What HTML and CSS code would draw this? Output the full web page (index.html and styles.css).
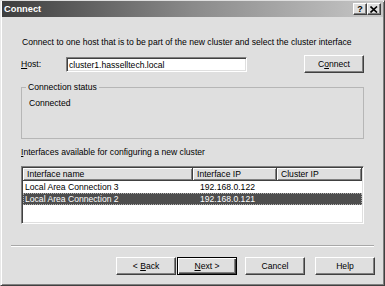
FILE: index.html
```html
<!DOCTYPE html>
<html>
<head>
<meta charset="utf-8">
<link rel="stylesheet" href="styles.css">
</head>
<body>
<div class="window">
  <div class="titlebar">
    <span class="title">Connect</span>
    <div class="tbtns">
      <span class="tbtn q">?</span>
      <span class="tbtn x"><svg width="8" height="7" viewBox="0 0 8 7"><path d="M0.5 0.5 L7 6.5 M7 0.5 L0.5 6.5" stroke="#000" stroke-width="1.6" fill="none"/></svg></span>
    </div>
  </div>
  <div class="content">
    <p class="intro">Connect to one host that is to be part of the new cluster and select the cluster interface</p>
    <div class="hostrow">
      <span class="hostlabel"><u>H</u>ost:</span>
      <div class="textbox">cluster1.hasselltech.local</div>
      <button class="btn connect">C<u>o</u>nnect</button>
    </div>
    <fieldset class="group">
      <legend>Connection status</legend>
      <div class="status">Connected</div>
    </fieldset>
    <div class="listlabel"><u>I</u>nterfaces available for configuring a new cluster</div>
    <div class="listview">
      <div class="lvhead">
        <div class="hcell c1">Interface name</div>
        <div class="hcell c2">Interface IP</div>
        <div class="hcell c3">Cluster IP</div>
      </div>
      <div class="lvrow">
        <div class="cell c1">Local Area Connection 3</div>
        <div class="cell c2">192.168.0.122</div>
        <div class="cell c3"></div>
      </div>
      <div class="lvrow selected">
        <div class="cell c1">Local Area Connection 2</div>
        <div class="cell c2">192.168.0.121</div>
        <div class="cell c3"></div>
      </div>
    </div>
  </div>
  <div class="sep"></div>
  <div class="footer">
    <button class="btn back">&lt; <u>B</u>ack</button>
    <button class="btn next default"><u>N</u>ext &gt;</button>
    <button class="btn cancel">Cancel</button>
    <button class="btn help">Help</button>
  </div>
</div>
</body>
</html>
```
FILE: styles.css
```css
* { box-sizing: border-box; }
html, body { margin: 0; padding: 0; }
body {
  width: 385px;
  height: 286px;
  overflow: hidden;
  background: #dfdfdf;
  font-family: "Liberation Sans", Arial, sans-serif;
  font-size: 8.6px;
  line-height: 11px;
  color: #000;
}
.window {
  width: 385px;
  height: 286px;
  background: #dfdfdf;
  border: 1px solid;
  border-color: #dfdfdf #404040 #404040 #e8e8e8;
  box-shadow: inset 1px 1px 0 #ffffff, inset -1px -1px 0 #808080;
  padding: 0 1px 1px 1px;
  display: flex;
  flex-direction: column;
}
.titlebar {
  height: 16px;
  flex: none;
  background: linear-gradient(to right, #3e3e3e 0%, #8a8a8a 50%, #c8c8c8 100%);
  display: flex;
  align-items: center;
  padding: 0 2px 0 2px;
}
.title {
  color: #fff;
  font-weight: bold;
  font-size: 9.3px;
  flex: 1;
}
.tbtns { display: flex; }
.tbtn {
  width: 14px;
  height: 12px;
  background: #dfdfdf;
  border: 1px solid;
  border-color: #fff #404040 #404040 #fff;
  box-shadow: inset -1px -1px 0 #808080;
  display: flex;
  align-items: center;
  justify-content: center;
  font-weight: bold;
  font-size: 9px;
  line-height: 9px;
}
.content {
  padding: 0 19px;
}
.intro {
  margin: 20px 0 0 0;
  padding-left: 1px;
}
.hostrow {
  margin-top: 7px;
  height: 18px;
  display: flex;
  align-items: center;
}
.hostlabel { width: 45px; }
.textbox {
  width: 181px;
  height: 15px;
  background: #fff;
  border: 1px solid;
  border-color: #808080 #fff #fff #808080;
  box-shadow: inset 1px 1px 0 #404040, inset -1px -1px 0 #dfdfdf;
  padding: 1px 0 0 2px;
  line-height: 12px;
}
.btn {
  font-family: inherit;
  font-size: 8.6px;
  line-height: 11px;
  color: #000;
  width: 60px;
  height: 18px;
  padding: 0;
  background: #dfdfdf;
  border: 1px solid;
  border-color: #fff #404040 #404040 #fff;
  box-shadow: inset -1px -1px 0 #808080;
  text-align: center;
}
.connect { margin-left: auto; }
.group {
  margin: 9px 0 0 0;
  height: 57px;
  padding: 5px 7px 0 7px;
  border: 1px solid #b6b6b6;
}
.group legend {
  padding: 0 2px;
  margin-left: -3px;
}
.listlabel { margin-top: 8px; }
.listview {
  margin-top: 8px;
  height: 58px;
  background: #fff;
  border: 1px solid;
  border-color: #808080 #fff #fff #808080;
  box-shadow: inset 1px 1px 0 #404040, inset -1px -1px 0 #dfdfdf;
  padding: 1px;
}
.lvhead { display: flex; height: 13px; }
.hcell {
  background: #dfdfdf;
  border-right: 1px solid #404040;
  border-bottom: 1px solid #404040;
  box-shadow: inset 1px 1px 0 #fff, inset -1px -1px 0 #808080;
  padding: 1px 0 0 4px;
  line-height: 11px;
}
.c1 { width: 170px; }
.c2 { width: 84px; }
.c3 { width: 85px; }
.lvrow { display: flex; height: 12px; }
.cell { padding-left: 2px; line-height: 12px; white-space: nowrap; }
.cell.c2, .cell.c3 { padding-left: 7px; }
.lvrow.selected {
  background: #4e4e4e;
  color: #fff;
  outline: 1px dotted #b0b0b0;
  outline-offset: -1px;
}
.sep {
  margin: 21px 9px 0 9px;
  height: 2px;
  border-top: 1px solid #a8a8a8;
  border-bottom: 1px solid #fff;
}
.footer {
  margin-top: 10px;
  display: flex;
  justify-content: flex-end;
  padding-right: 8px;
}
.back { margin-right: 1px; }
.default {
  border: 1px solid #000;
  box-shadow: inset 1px 1px 0 #fff, inset -1px -1px 0 #404040, inset -2px -2px 0 #808080;
}
.cancel { margin-left: 8px; }
.help { margin-left: 10px; }
```
